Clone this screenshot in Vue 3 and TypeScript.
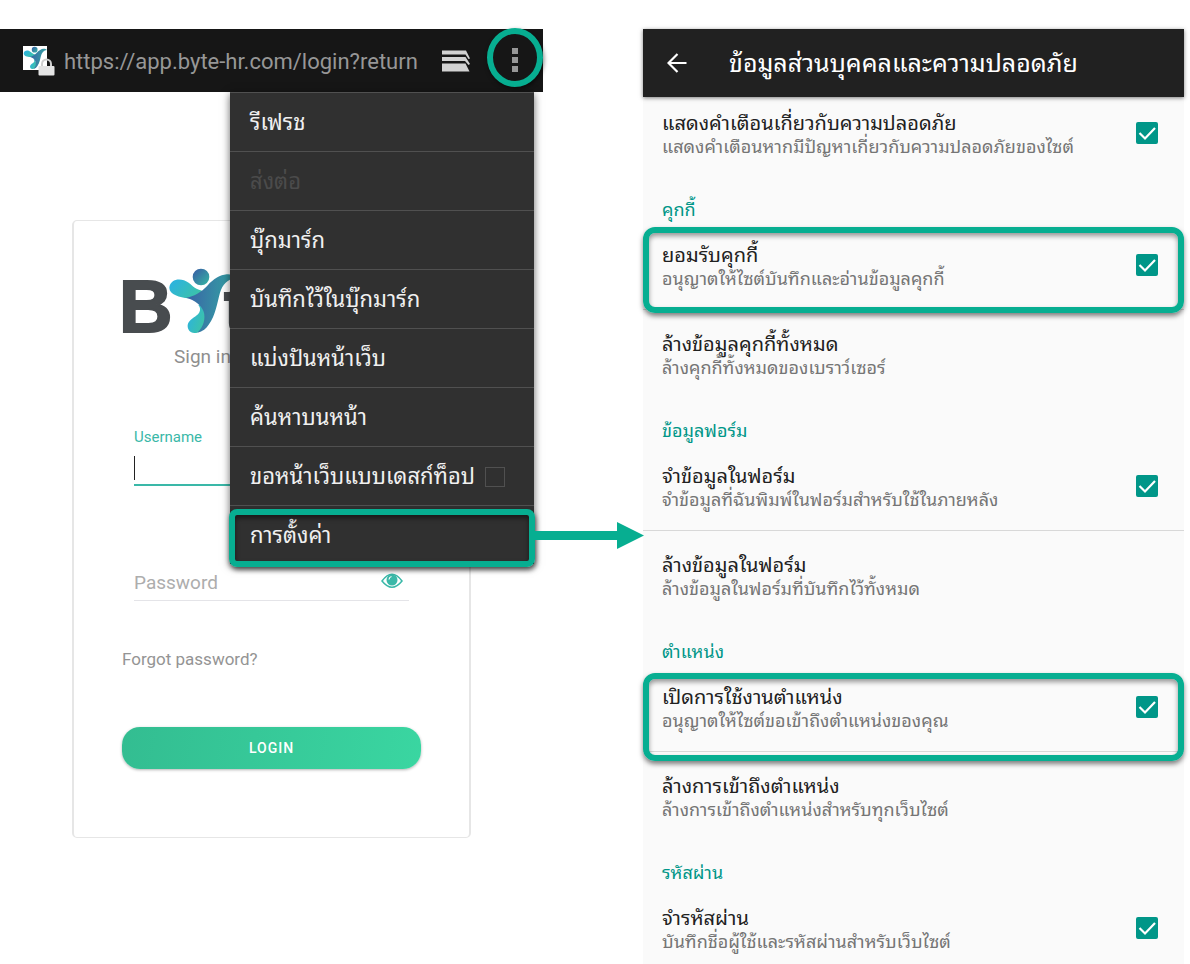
<script setup lang="ts">
import { reactive, ref } from 'vue'

interface MenuEntry {
  id: string
  label: string
  disabled?: boolean
  checkbox?: boolean
  highlighted?: boolean
}

interface Setting {
  id: string
  title: string
  summary: string
  toggle?: boolean
  divided?: boolean
  frame?: 'upper' | 'lower'
}

interface Section {
  heading?: string
  settings: Setting[]
}

const url = ref('https://app.byte-hr.com/login?return')
const username = ref('')
const password = ref('')
const desktopSite = ref(false)

const menu: MenuEntry[] = [
  { id: 'refresh', label: 'รีเฟรช' },
  { id: 'forward', label: 'ส่งต่อ', disabled: true },
  { id: 'bookmarks', label: 'บุ๊กมาร์ก' },
  { id: 'save', label: 'บันทึกไว้ในบุ๊กมาร์ก' },
  { id: 'share', label: 'แบ่งปันหน้าเว็บ' },
  { id: 'find', label: 'ค้นหาบนหน้า' },
  { id: 'desktop', label: 'ขอหน้าเว็บแบบเดสก์ท็อป', checkbox: true },
  { id: 'settings', label: 'การตั้งค่า', highlighted: true },
]

const sections: Section[] = [
  {
    settings: [
      {
        id: 'warnings',
        title: 'แสดงคำเตือนเกี่ยวกับความปลอดภัย',
        summary: 'แสดงคำเตือนหากมีปัญหาเกี่ยวกับความปลอดภัยของไซต์',
        toggle: true,
      },
    ],
  },
  {
    heading: 'คุกกี้',
    settings: [
      {
        id: 'cookies',
        title: 'ยอมรับคุกกี้',
        summary: 'อนุญาตให้ไซต์บันทึกและอ่านข้อมูลคุกกี้',
        toggle: true,
        divided: true,
        frame: 'upper',
      },
      { id: 'clear-cookies', title: 'ล้างข้อมูลคุกกี้ทั้งหมด', summary: 'ล้างคุกกี้ทั้งหมดของเบราว์เซอร์' },
    ],
  },
  {
    heading: 'ข้อมูลฟอร์ม',
    settings: [
      {
        id: 'forms',
        title: 'จำข้อมูลในฟอร์ม',
        summary: 'จำข้อมูลที่ฉันพิมพ์ในฟอร์มสำหรับใช้ในภายหลัง',
        toggle: true,
        divided: true,
      },
      { id: 'clear-forms', title: 'ล้างข้อมูลในฟอร์ม', summary: 'ล้างข้อมูลในฟอร์มที่บันทึกไว้ทั้งหมด' },
    ],
  },
  {
    heading: 'ตำแหน่ง',
    settings: [
      {
        id: 'location',
        title: 'เปิดการใช้งานตำแหน่ง',
        summary: 'อนุญาตให้ไซต์ขอเข้าถึงตำแหน่งของคุณ',
        toggle: true,
        divided: true,
        frame: 'lower',
      },
      { id: 'clear-location', title: 'ล้างการเข้าถึงตำแหน่ง', summary: 'ล้างการเข้าถึงตำแหน่งสำหรับทุกเว็บไซต์' },
    ],
  },
  {
    heading: 'รหัสผ่าน',
    settings: [
      { id: 'passwords', title: 'จำรหัสผ่าน', summary: 'บันทึกชื่อผู้ใช้และรหัสผ่านสำหรับเว็บไซต์', toggle: true },
    ],
  },
]

const enabled = reactive<Record<string, boolean>>({
  warnings: true,
  cookies: true,
  forms: true,
  location: true,
  passwords: true,
})
</script>

<template>
  <main class="guide">
    <svg class="defs" aria-hidden="true">
      <defs>
        <linearGradient id="arm" x1="0" y1="0" x2="1" y2="0.5">
          <stop offset="0.2" stop-color="#2eb4da" />
          <stop offset="1" stop-color="#3cc3a8" />
        </linearGradient>
        <linearGradient id="body" x1="0" y1="0.3" x2="1" y2="0.4">
          <stop offset="0" stop-color="#3a62a6" />
          <stop offset="0.75" stop-color="#3597a4" />
        </linearGradient>
        <linearGradient id="head" x1="0" y1="0" x2="1" y2="1">
          <stop offset="0.1" stop-color="#3862a4" />
          <stop offset="1" stop-color="#35b8a4" />
        </linearGradient>
        <symbol id="figure" viewBox="322 175 208 198">
          <circle cx="423" cy="202" r="25" fill="url(#head)" />
          <path
            d="M421 284C435 300 438 323 436 339C432 358 420 370 403 370C389 369 382 359 383 346C386 330 405 323 414 314C421 306 423 296 415 286Z"
            fill="url(#arm)"
          />
          <path
            d="M385 266C360 262 328 256 328 234C330 211 354 205 372 212C394 220 400 239 426 243L432 258C422 266 404 268 385 266Z"
            fill="url(#arm)"
          />
          <path
            d="M378 264C401 261 424 247 442 228C462 207 480 196 500 194C509 192 521 198 530 204C501 208 488 224 480 249C471 281 467 316 447 344C439 357 428 366 412 369C432 350 437 325 431 306C424 285 405 272 378 264Z"
            fill="url(#body)"
          />
        </symbol>
      </defs>
    </svg>

    <section class="browser">
      <header class="toolbar">
        <span class="site">
          <svg class="favicon" viewBox="0 0 24 24" aria-hidden="true">
            <rect width="24" height="24" fill="#fff" />
            <use href="#figure" x="0" y="0" width="24" height="24" />
          </svg>
          <svg class="lock" viewBox="0 0 17 18" aria-hidden="true">
            <path d="M4 9V6a4.500 4.500 0 0 1 9 0V9" fill="none" stroke="#cfcfcf" stroke-width="2" />
            <rect x="0.500" y="8" width="16" height="9.500" rx="1" fill="#e4e4e4" />
          </svg>
        </span>
        <input v-model="url" class="url" type="text" aria-label="URL" />
        <button class="tabs" type="button" aria-label="Tabs">
          <svg viewBox="0 0 30 24">
            <path d="M1 1.500H25L29 9.500L27.500 10L24.500 5.500H1Z" fill="#d2d2d2" />
            <path d="M1 8H24.500L29 15L27.500 16L24 12H1Z" fill="#d2d2d2" />
            <path d="M1 14.500H24.500L28.500 22.500H1Z" fill="#d2d2d2" />
          </svg>
        </button>
        <button class="more" type="button" aria-label="Menu">
          <svg viewBox="0 0 8 26">
            <path d="M1 1H7V7H1ZM1 10H7V16H1ZM1 19H7V25H1Z" fill="#979797" />
          </svg>
        </button>
      </header>

      <form class="card" @submit.prevent>
        <svg class="logo" viewBox="0 0 110 68" role="img" aria-label="Byte">
          <text class="wordmark" x="-4" y="64">B</text>
          <text class="wordmark" x="101" y="64">t</text>
          <use href="#figure" x="44" y="0" width="70" height="66" />
        </svg>
        <p class="signin">Sign in</p>
        <div class="field username">
          <label for="username">Username</label>
          <input id="username" v-model="username" type="text" />
          <span class="caret"></span>
        </div>
        <div class="field password">
          <input v-model="password" type="password" placeholder="Password" aria-label="Password" />
          <button type="button" class="eye" aria-label="Show password">
            <svg viewBox="0 0 22 16">
              <path d="M1 8Q11-5.500 21 8Q11 20.500 1 8Z" fill="#fff" stroke="#3ab8a8" stroke-width="1.500" />
              <circle cx="11" cy="7" r="5.500" fill="#3ab8a8" />
              <path d="M8 6.500Q8.200 4 10.500 3.500" fill="none" stroke="#fff" stroke-width="1.200" />
            </svg>
          </button>
        </div>
        <a class="forgot" href="#">Forgot password?</a>
        <button class="login" type="submit">LOGIN</button>
      </form>

      <ul class="menu">
        <li v-for="entry in menu" :key="entry.id" :class="{ highlighted: entry.highlighted }">
          <label v-if="entry.checkbox" class="entry">
            <span>{{ entry.label }}</span>
            <input v-model="desktopSite" type="checkbox" class="desktop" />
          </label>
          <button v-else class="entry" type="button" :disabled="entry.disabled">{{ entry.label }}</button>
          <svg v-if="entry.highlighted" class="arrow" viewBox="0 0 110 28" aria-hidden="true">
            <path d="M0 9H83V0L110 13.500L83 27V18H0Z" fill="#07ae91" />
          </svg>
        </li>
      </ul>
    </section>

    <section class="settings">
      <header class="appbar">
        <button type="button" aria-label="Back">
          <svg viewBox="0 0 20 20">
            <path d="M10.500 1L1.500 10L10.500 19M1.500 10H19.500" fill="none" stroke="#fff" stroke-width="2.200" />
          </svg>
        </button>
        <h1>ข้อมูลส่วนบุคคลและความปลอดภัย</h1>
      </header>
      <div class="list">
        <section v-for="(section, i) in sections" :key="i">
          <h2 v-if="section.heading">{{ section.heading }}</h2>
          <div
            v-for="item in section.settings"
            :key="item.id"
            class="item"
            :class="[{ divided: item.divided }, item.frame && 'frame-' + item.frame]"
          >
            <label class="text" :for="item.toggle ? item.id : undefined">
              <span class="title">{{ item.title }}</span>
              <span class="summary">{{ item.summary }}</span>
            </label>
            <span v-if="item.toggle" class="check">
              <input :id="item.id" v-model="enabled[item.id]" type="checkbox" />
              <svg v-if="enabled[item.id]" viewBox="0 0 22 22" aria-hidden="true">
                <path d="M3.500 11L9 16.500L19 6" fill="none" stroke="#fff" stroke-width="2.200" />
              </svg>
            </span>
          </div>
        </section>
      </div>
    </section>
  </main>
</template>

<style>
body {
  background: #fff;
}
</style>

<style scoped>
.guide {
  box-sizing: border-box;
  display: flex;
  gap: 100px;
  height: 100vh;
  padding: 29px 6px 0 0;
  overflow: hidden;
  font-family: Roboto, "Noto Sans Thai Looped", "Droid Sans Thai", "Noto Sans Thai", "Noto Sans", sans-serif;
}
.guide *,
.guide *::before {
  box-sizing: border-box;
}
button,
input {
  margin: 0;
  padding: 0;
  border: 0;
  outline: 0;
  background: none;
  font-family: inherit;
}
svg {
  display: block;
}
.defs {
  position: absolute;
  width: 0;
  height: 0;
}
.browser {
  position: relative;
  flex: 543 1 0;
  min-width: 0;
}
.toolbar {
  display: flex;
  align-items: center;
  height: 63px;
  padding-left: 23px;
  background: #161616;
}
.site {
  position: relative;
  width: 32px;
  height: 30px;
}
.favicon {
  width: 24px;
  height: 24px;
}
.lock {
  position: absolute;
  right: 0;
  bottom: 0;
  width: 17px;
  height: 18px;
}
.url {
  flex: 1;
  min-width: 0;
  margin-left: 9px;
  padding-top: 2px;
  color: #979797;
  font-size: 22px;
  line-height: 28px;
}
.tabs {
  width: 30px;
  margin-right: 16px;
}
.more {
  display: grid;
  place-items: center;
  width: 56px;
  height: 59px;
  margin-top: -6px;
  border: 6px solid #07ae91;
  border-radius: 50%;
  box-shadow: 1px 2px 4px rgba(0, 0, 0, 0.5);
}
.more svg {
  width: 8px;
  height: 26px;
  margin-top: 4px;
}
.card {
  display: flex;
  flex-direction: column;
  align-items: flex-start;
  margin: 128px 72px 0;
  height: 618px;
  padding: 47px 48px 0;
  border: 2px solid #e6e6e6;
  border-width: 1px 2px;
  border-radius: 5px;
}
.logo {
  width: 110px;
  height: 68px;
  margin-left: 1px;
  overflow: visible;
}
.wordmark {
  font: bold 74px "Liberation Sans", sans-serif;
  fill: #484c4f;
  stroke: #484c4f;
  stroke-width: 2px;
}
.signin {
  margin: 9px 0 0 52px;
  color: #8f8f8f;
  font-size: 19px;
  line-height: 24px;
}
.field {
  position: relative;
  display: flex;
  align-self: stretch;
  margin: 0 12px;
}
.field input {
  flex: 1;
  min-width: 0;
  font-size: 19px;
  color: #333;
}
.username {
  flex-direction: column;
  height: 60px;
  margin-top: 57px;
  border-bottom: 2px solid #3ab8a8;
}
.username label {
  color: #3ab8a8;
  font-size: 15px;
  line-height: 22px;
}
.caret {
  position: absolute;
  left: 0;
  bottom: 4px;
  width: 1px;
  height: 24px;
  background: #222;
}
.password {
  align-items: center;
  height: 37px;
  margin-top: 78px;
  border-bottom: 1px solid #e4e4e8;
}
.password input::placeholder {
  color: #adadad;
  opacity: 1;
}
.eye {
  width: 22px;
  margin: 0 6px 3px 0;
}
.forgot {
  margin-top: 46px;
  color: #949494;
  font-size: 17px;
  line-height: 24px;
  text-decoration: none;
}
.login {
  align-self: stretch;
  height: 42px;
  margin-top: 56px;
  border-radius: 18px;
  background: linear-gradient(100deg, #33bd91, #3ad6a1);
  box-shadow: 0 1px 3px rgba(0, 0, 0, 0.3);
  color: #fff;
  font-size: 14px;
  font-weight: 500;
  letter-spacing: 1px;
}
.menu {
  position: absolute;
  top: 63px;
  right: 9px;
  width: 304px;
  margin: 0;
  padding: 0;
  list-style: none;
  background: #303030;
  box-shadow: 0 2px 8px rgba(0, 0, 0, 0.6);
}
.menu li {
  position: relative;
  height: 59px;
  border-top: 1px solid #505050;
}
.entry {
  display: flex;
  align-items: center;
  justify-content: space-between;
  width: 100%;
  height: 100%;
  padding: 2px 29px 0 20px;
  color: #f0f0f0;
  font-size: 22px;
  line-height: 32px;
  white-space: nowrap;
}
.entry:disabled {
  color: #4b4b4b;
}
.desktop {
  appearance: none;
  width: 20px;
  height: 20px;
  border: 1px solid #505050;
}
.highlighted::before {
  content: "";
  position: absolute;
  inset: 3px -1px -3px;
  border: 6px solid #07ae91;
  border-radius: 8px;
  box-shadow: 1px 3px 5px rgba(0, 0, 0, 0.6), inset 0 3px 5px rgba(0, 0, 0, 0.5);
  pointer-events: none;
}
.arrow {
  position: absolute;
  top: 16px;
  left: 100%;
  width: 110px;
  height: 28px;
  z-index: 1;
}
.settings {
  display: flex;
  flex-direction: column;
  flex: 541 1 0;
  min-width: 0;
  background: #fafafa;
}
.appbar {
  position: relative;
  z-index: 1;
  display: flex;
  flex: none;
  align-items: center;
  gap: 42px;
  height: 68px;
  padding-left: 24px;
  background: #212121;
  box-shadow: 0 1px 4px rgba(0, 0, 0, 0.5);
}
.appbar svg {
  width: 20px;
  height: 20px;
}
.appbar h1 {
  margin: 0;
  padding-top: 2px;
  color: #fff;
  font-size: 25px;
  font-weight: 400;
  line-height: 36px;
}
.list {
  margin-top: -8px;
}
.list h2 {
  height: 44px;
  margin: 0;
  padding: 21px 19px 0;
  color: #009688;
  font-size: 18px;
  font-weight: 400;
  line-height: 23px;
}
.item {
  position: relative;
  display: flex;
  align-items: center;
  justify-content: space-between;
  min-height: 88px;
  padding: 0 26px 0 19px;
}
.divided {
  min-height: 89px;
  border-bottom: 1px solid #d8d8d8;
}
.text {
  display: flex;
  flex-direction: column;
  padding-top: 4px;
  line-height: 24px;
}
.title {
  color: #212121;
  font-size: 20px;
}
.summary {
  color: #757575;
  font-size: 18px;
}
.check {
  position: relative;
  width: 22px;
  height: 22px;
}
.check input {
  display: block;
  appearance: none;
  width: 22px;
  height: 22px;
  border: 2px solid #009688;
  border-radius: 2px;
}
.check input:checked {
  background: #009688;
}
.check svg {
  position: absolute;
  inset: 0;
  pointer-events: none;
}
.frame-upper::before,
.frame-lower::before {
  content: "";
  position: absolute;
  inset: 6px 0 -4px;
  border: 6px solid #07ae91;
  border-radius: 12px;
  box-shadow: 0 3px 5px rgba(0, 0, 0, 0.5), inset 0 3px 5px rgba(0, 0, 0, 0.4);
  pointer-events: none;
}
.frame-lower::before {
  inset: 10px 0 -10px;
}
</style>
